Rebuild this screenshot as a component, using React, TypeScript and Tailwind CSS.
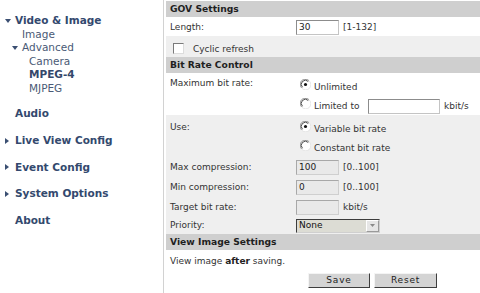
import React from "react";

function Radio({ checked }: { checked?: boolean }) {
  return (
    <svg width="11" height="11" viewBox="0 0 12 12" className="shrink-0">
      <circle cx="6" cy="6" r="5.5" fill="#ffffff" />
      <path d="M1.8 9.8 A5.3 5.3 0 0 1 9.8 1.8" stroke="#8a8a8a" strokeWidth="1" fill="none" />
      <path d="M2.7 9 A4.3 4.3 0 0 1 9 2.7" stroke="#3a3a3a" strokeWidth="1" fill="none" />
      <path d="M2.2 10.2 A5.3 5.3 0 0 0 10.2 2.2" stroke="#e4e4e4" strokeWidth="1" fill="none" />
      {checked && <circle cx="6" cy="6" r="1.7" fill="#111111" />}
    </svg>
  );
}

function DownTri() {
  return (
    <svg width="6" height="4" viewBox="0 0 6 4" className="shrink-0">
      <path d="M0 0 H6 L3 4 Z" fill="#3b4f72" />
    </svg>
  );
}

function RightTri() {
  return (
    <svg width="4" height="6" viewBox="0 0 4 6" className="shrink-0">
      <path d="M0 0 V6 L4 3 Z" fill="#3b4f72" />
    </svg>
  );
}

function Header({ children }: { children: React.ReactNode }) {
  return (
    <div className="h-[16px] bg-[#cfcfcf] flex items-center pl-[4px] font-bold text-[9.2px] text-[#1f1f1f]">
      {children}
    </div>
  );
}

function WhiteInput({ value, w }: { value?: string; w: string }) {
  return (
    <div
      className={`${w} h-[15px] bg-white border border-t-[#8c8c8c] border-l-[#8c8c8c] border-r-[#c4c4c4] border-b-[#c4c4c4] flex items-center pl-[2px] text-[9px] text-[#222]`}
    >
      {value}
    </div>
  );
}

function GrayInput({ value }: { value?: string }) {
  return (
    <div className="w-[43px] h-[15px] bg-[#e9e9e9] border border-t-[#a8a8a8] border-l-[#a8a8a8] border-r-[#cfcfcf] border-b-[#cfcfcf] flex items-center pl-[2px] text-[9px] text-[#222]">
      {value}
    </div>
  );
}

export default function App() {
  return (
    <div className="w-[480px] h-[293px] flex bg-white overflow-hidden font-['DejaVu_Sans',Verdana,sans-serif]">
      {/* Sidebar */}
      <aside className="w-[163px] shrink-0 pt-[14px] text-[10.5px] leading-[13.5px]">
        <div className="flex items-center font-bold text-[#33496e]">
          <span className="w-[15px] pl-[5px] flex items-center">
            <DownTri />
          </span>
          Video &amp; Image
        </div>
        <div className="pl-[22px] text-[#4a5a76]">Image</div>
        <div className="flex items-center text-[#4a5a76]">
          <span className="w-[22px] pl-[12px] flex items-center">
            <DownTri />
          </span>
          Advanced
        </div>
        <div className="pl-[29px] text-[#4a5a76]">Camera</div>
        <div className="pl-[29px] font-bold text-[#34476a]">MPEG-4</div>
        <div className="pl-[29px] text-[#4a5a76]">MJPEG</div>
        <div className="mt-[12px] flex flex-col gap-[13.25px] font-bold text-[#33496e]">
          <div className="pl-[15px]">Audio</div>
          <div className="flex items-center">
            <span className="w-[15px] pl-[5px] flex items-center">
              <RightTri />
            </span>
            Live View Config
          </div>
          <div className="flex items-center">
            <span className="w-[15px] pl-[5px] flex items-center">
              <RightTri />
            </span>
            Event Config
          </div>
          <div className="flex items-center">
            <span className="w-[15px] pl-[5px] flex items-center">
              <RightTri />
            </span>
            System Options
          </div>
          <div className="pl-[15px]">About</div>
        </div>
      </aside>

      {/* Main panel */}
      <main className="flex-1 border-l border-[#d2d2d2] pl-[2px] pt-[1px] text-[9px] text-[#333333] leading-none">
        <Header>GOV Settings</Header>

        <div className="h-[19px] flex items-center bg-white pt-[1px]">
          <div className="w-[130px] pl-[4px] pt-[1px]">Length:</div>
          <WhiteInput value="30" w="w-[43px]" />
          <span className="ml-[4px] pt-[1px]">[1-132]</span>
        </div>

        <div className="h-[21px] flex items-center bg-[#efefef] pl-[7px] pt-[5px]">
          <div className="w-[11px] h-[11px] bg-white border border-t-[#7a7a7a] border-l-[#7a7a7a] border-r-[#dcdcdc] border-b-[#dcdcdc] mb-[2px]" />
          <span className="ml-[9px]">Cyclic refresh</span>
        </div>

        <Header>Bit Rate Control</Header>

        <div className="h-[42px] flex bg-white pt-[4px]">
          <div className="w-[130px] pl-[4px] pt-[2px]">Maximum bit rate:</div>
          <div className="flex flex-col">
            <div className="h-[20px] flex items-center pl-[4px]">
              <span className="mb-[6px]">
                <Radio checked />
              </span>
              <span className="ml-[3px]">Unlimited</span>
            </div>
            <div className="h-[18px] flex items-center pl-[4px]">
              <span className="mb-[5px]">
                <Radio />
              </span>
              <span className="ml-[3px] w-[54px]">Limited to</span>
              <WhiteInput w="w-[72px]" />
              <span className="ml-[4px]">kbit/s</span>
            </div>
          </div>
        </div>

        <div className="h-[42px] flex bg-[#efefef] pt-[4px]">
          <div className="w-[130px] pl-[4px] pt-[4px]">Use:</div>
          <div className="flex flex-col">
            <div className="h-[20px] flex items-center pl-[4px]">
              <span className="mb-[6px]">
                <Radio checked />
              </span>
              <span className="ml-[3px]">Variable bit rate</span>
            </div>
            <div className="h-[18px] flex items-center pl-[4px]">
              <span className="mb-[5px]">
                <Radio />
              </span>
              <span className="ml-[3px]">Constant bit rate</span>
            </div>
          </div>
        </div>

        <div className="bg-[#efefef]">
          <div className="h-[20px] flex items-center">
            <div className="w-[130px] pl-[4px]">Max compression:</div>
            <GrayInput value="100" />
            <span className="ml-[4px]">[0..100]</span>
          </div>
          <div className="h-[20px] flex items-center">
            <div className="w-[130px] pl-[4px]">Min compression:</div>
            <GrayInput value="0" />
            <span className="ml-[4px]">[0..100]</span>
          </div>
          <div className="h-[20px] flex items-center">
            <div className="w-[130px] pl-[4px]">Target bit rate:</div>
            <GrayInput />
            <span className="ml-[4px]">kbit/s</span>
          </div>
          <div className="h-[17px] flex items-center">
            <div className="w-[130px] pl-[4px]">Priority:</div>
            <div className="w-[84px] h-[14px] flex bg-[#dcdcd4] border border-t-[#3c3c3c] border-l-[#3c3c3c] border-r-[#cfcfcf] border-b-[#cfcfcf]">
              <span className="flex-1 flex items-center pl-[2px] text-[#111]">None</span>
              <span className="w-[13px] h-full bg-[#e6e6e6] border border-t-white border-l-white border-r-[#9a9a9a] border-b-[#9a9a9a] flex items-center justify-center">
                <svg width="5" height="3" viewBox="0 0 5 3">
                  <path d="M0 0 H5 L2.5 3 Z" fill="#8a8a8a" />
                </svg>
              </span>
            </div>
          </div>
        </div>

        <Header>View Image Settings</Header>

        <div className="h-[22px] flex items-center pl-[4px]">
          View image&nbsp;<b className="font-bold text-[#222]">after</b>&nbsp;saving.
        </div>

        <div className="flex gap-[4px] pl-[142px] pt-[1px]">
          <div className="w-[62px] h-[15px] bg-[#d4d4d4] border border-t-[#f4f4f4] border-l-[#f4f4f4] border-r-[#3e3e3e] border-b-[#3e3e3e] flex items-center justify-center tracking-[0.8px] text-[#222]">
            Save
          </div>
          <div className="w-[63px] h-[15px] bg-[#d4d4d4] border border-t-[#f4f4f4] border-l-[#f4f4f4] border-r-[#3e3e3e] border-b-[#3e3e3e] flex items-center justify-center tracking-[0.8px] text-[#222]">
            Reset
          </div>
        </div>
      </main>
    </div>
  );
}
